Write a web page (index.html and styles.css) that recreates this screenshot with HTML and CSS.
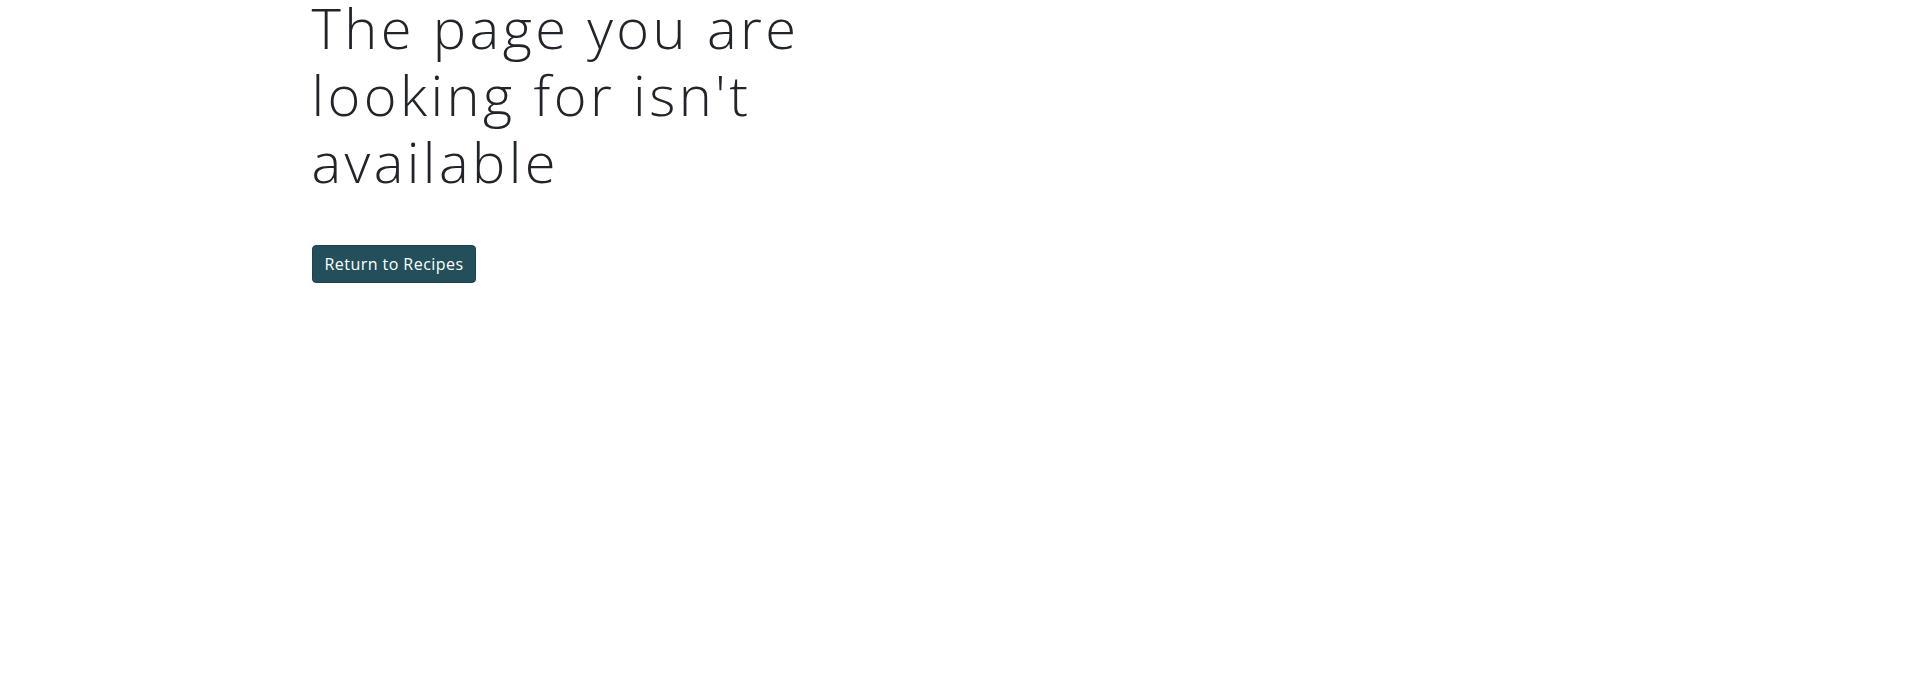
FILE: index.html
```html
<!DOCTYPE html>
<html lang="en">
<head>
<meta charset="utf-8">
<title>Page not found</title>
<link rel="stylesheet" href="styles.css">
</head>
<body>
<main class="container">
  <h1 class="display">The page you are<br>looking for isn't<br>available</h1>
  <a class="btn" href="#">Return to Recipes</a>
</main>
</body>
</html>
```
FILE: styles.css
```css
* { box-sizing: border-box; }
html, body { margin: 0; padding: 0; background: #fff; }
body {
  font-family: "Open Sans", "Liberation Sans", sans-serif;
  color: #212529;
}
.container {
  max-width: 1320px;
  margin: 0 auto;
  padding: 0 12px;
}
.display {
  font-family: "Open Sans", sans-serif;
  font-weight: 300;
  font-size: 56px;
  line-height: 67.2px;
  letter-spacing: 3.4px;
  margin: -6px 0 49px;
  color: #212529;
}
.btn {
  display: inline-block;
  background: #234f5b;
  color: #fff;
  text-decoration: none;
  font-size: 16px;
  line-height: 24px;
  letter-spacing: 0.45px;
  padding: 6px 12px;
  border: 1px solid #1d4550;
  border-radius: 4px;
}
```
